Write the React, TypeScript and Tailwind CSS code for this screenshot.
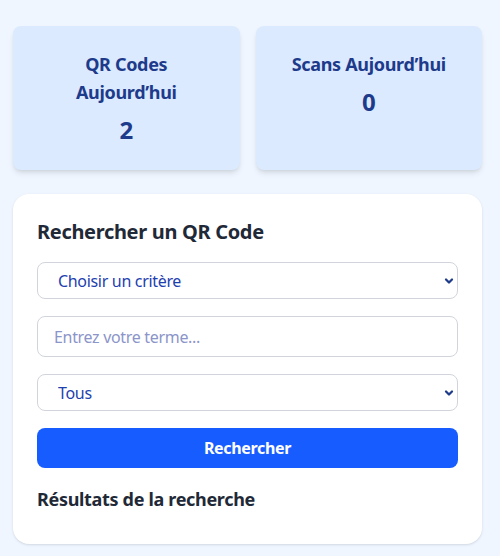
import { ChevronDown } from "lucide-react";

function StatCard({ label, value }: { label: string; value: number }) {
  return (
    <div className="rounded-lg bg-[#dbeafe] p-6 text-center shadow-md">
      <h3 className="text-lg leading-7 font-bold text-[#1e3a8a]">{label}</h3>
      <p className="mt-2 text-2xl font-bold text-[#1e3a8a]">{value}</p>
    </div>
  );
}

function Select({ options }: { options: string[] }) {
  return (
    <div className="relative mb-[17px]">
      <select className="block h-[37px] w-full appearance-none rounded-lg border border-[#d1d5db] bg-white pl-5 pr-8 text-base text-[#1e40af] outline-none">
        {options.map((o) => (
          <option key={o}>{o}</option>
        ))}
      </select>
      <ChevronDown
        className="pointer-events-none absolute top-1/2 right-[3px] h-3 w-3 -translate-y-1/2 text-[#1e3a8a]"
        strokeWidth={4.5}
      />
    </div>
  );
}

export default function App() {
  return (
    <div
      className="min-h-[556px] bg-[#eff6ff] pt-[26px] pr-[18px] pb-3 pl-[13px] tracking-[-0.02em]"
      style={{ fontFamily: '"Noto Sans", "Open Sans", sans-serif' }}
    >
      <div className="grid grid-cols-2 gap-4">
        <StatCard label="QR Codes Aujourd’hui" value={2} />
        <StatCard label="Scans Aujourd’hui" value={0} />
      </div>

      <div className="mt-6 rounded-2xl bg-white p-6 pb-[31px] shadow-sm">
        <h2 className="mb-4 text-xl font-bold text-[#1f2937]">Rechercher un QR Code</h2>
        <Select options={["Choisir un critère"]} />
        <input
          type="text"
          placeholder="Entrez votre terme..."
          className="mb-[17px] block h-[41px] w-full rounded-lg border border-[#d1d5db] px-4 text-base text-[#1e40af] outline-none placeholder:text-[#8b95c9]"
        />
        <Select options={["Tous"]} />
        <button className="block h-10 w-full rounded-lg bg-[#175cff] text-base font-bold text-white">
          Rechercher
        </button>
        <h3 className="mt-[17px] text-lg font-bold text-[#1f2937]">Résultats de la recherche</h3>
      </div>
    </div>
  );
}
